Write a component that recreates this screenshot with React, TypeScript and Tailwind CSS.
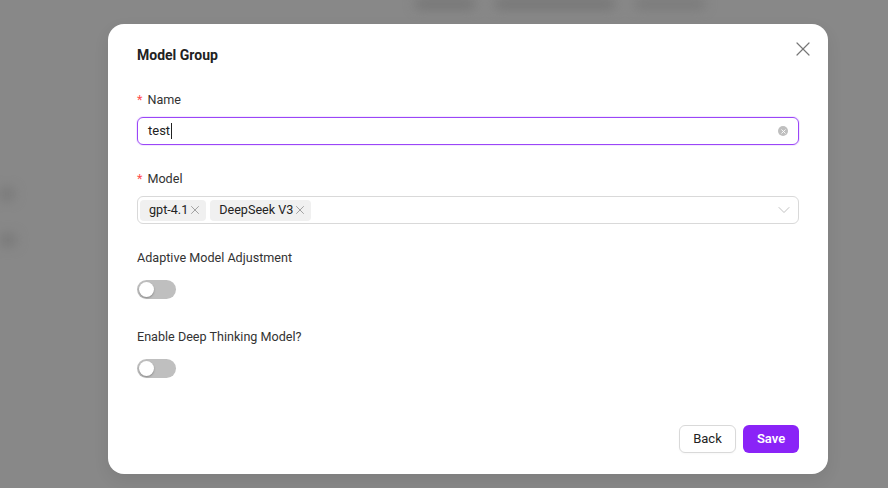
import { X, ChevronDown } from 'lucide-react'

function Switch() {
  return (
    <button
      type="button"
      className="flex h-[19px] w-[39px] items-center rounded-full bg-[#bfbfbf] px-[2px]"
    >
      <span className="h-[15px] w-[15px] rounded-full bg-white shadow-[0_1px_2px_rgba(0,0,0,0.3)]" />
    </button>
  )
}

function Tag({ label }: { label: string }) {
  return (
    <span className="flex h-[21px] items-center rounded-[4px] bg-[#f0f0f0] pl-[9px] pr-[4px] text-[12.6px] text-[#222]">
      {label}
      <X className="h-[14px] w-[14px] text-[#888]" strokeWidth={1.3} />
    </span>
  )
}

function Label({ text, required }: { text: string; required?: boolean }) {
  return (
    <div className="flex h-5 items-center pt-[2px] text-[12.6px] text-[#333]">
      {required ? <span className="mr-[5px] text-[#ff4d4f]">*</span> : null}
      {text}
    </div>
  )
}

export default function App() {
  return (
    <div
      className="relative h-[488px] w-[888px] overflow-hidden bg-[#888888]"
      style={{ fontFamily: 'Roboto, "Noto Sans", sans-serif' }}
    >
      {/* page behind the mask */}
      <div className="flex gap-[20px] pl-[415px] pt-0 blur-[6px]">
        <span className="h-[8px] w-[60px] rounded bg-[#6f6f6f]" />
        <span className="h-[8px] w-[120px] rounded bg-[#6f6f6f]" />
        <span className="h-[8px] w-[70px] rounded bg-[#757575]" />
      </div>
      <div className="mt-[180px] flex flex-col gap-[34px] blur-[6px]">
        <span className="h-[12px] w-[14px] rounded bg-[#777]" />
        <span className="h-[12px] w-[16px] rounded bg-[#777]" />
      </div>

      <div className="absolute inset-0 pl-[108px] pt-[24px]">
        <div className="flex h-[450px] w-[720px] flex-col rounded-[16px] bg-white px-[29px] pb-[21px] pt-[21px] shadow-[0_6px_16px_rgba(0,0,0,0.08)]">
          <div className="flex h-5 items-center justify-between">
            <h2 className="pt-[1px] text-[14px] font-bold text-[#222]">Model Group</h2>
            <X className="-mr-[16px] -mt-[8px] h-6 w-6 self-start text-[#777]" strokeWidth={1.2} />
          </div>

          <div className="mt-[24px]">
            <Label text="Name" required />
          </div>
          <div className="mt-[8px] flex h-[28px] items-center justify-between rounded-[6px] border border-[#9b46f8] pl-[10px] pr-[10px] shadow-[0_0_0_1px_rgba(155,70,248,0.12)]">
            <span className="flex items-center text-[13px] text-[#222]">
              test
              <span className="ml-[1px] h-[16px] w-px bg-[#222]" />
            </span>
            <span className="flex h-[10px] w-[10px] items-center justify-center rounded-full bg-[#bfbfbf]">
              <X className="h-[7px] w-[7px] text-white" strokeWidth={3} />
            </span>
          </div>

          <div className="mt-[23px]">
            <Label text="Model" required />
          </div>
          <div className="mt-[8px] flex h-[28px] items-center justify-between rounded-[6px] border border-[#d9d9d9] pl-[2px] pr-[4px]">
            <div className="flex items-center gap-[4px]">
              <Tag label="gpt-4.1" />
              <Tag label="DeepSeek V3" />
            </div>
            <ChevronDown className="h-5 w-5 text-[#bbb]" strokeWidth={1.1} />
          </div>

          <div className="mt-[23px]">
            <Label text="Adaptive Model Adjustment" />
          </div>
          <div className="mt-[13px]">
            <Switch />
          </div>

          <div className="mt-[27px]">
            <Label text="Enable Deep Thinking Model?" />
          </div>
          <div className="mt-[13px]">
            <Switch />
          </div>

          <div className="mt-auto flex justify-end gap-[7px]">
            <button
              type="button"
              className="h-[28px] w-[57px] rounded-[6px] border border-[#d9d9d9] bg-white text-[13px] text-[#222] shadow-[0_1px_2px_rgba(0,0,0,0.03)]"
            >
              Back
            </button>
            <button
              type="button"
              className="h-[28px] w-[56px] rounded-[6px] bg-[#8a23f7] text-[13px] font-semibold text-white"
            >
              Save
            </button>
          </div>
        </div>
      </div>
    </div>
  )
}
